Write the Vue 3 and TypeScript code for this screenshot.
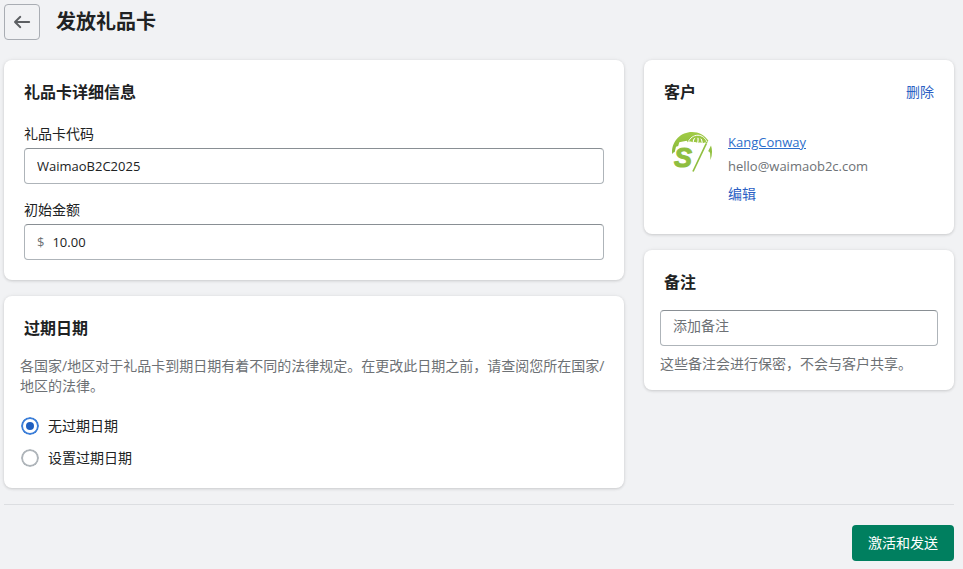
<script setup lang="ts">
import { ref } from 'vue'

type Expiry = 'none' | 'date'

const code = ref('WaimaoB2C2025')
const amount = ref('10.00')
const note = ref('')
const expiry = ref<Expiry>('none')

const expiryOptions: { value: Expiry; label: string }[] = [
  { value: 'none', label: '无过期日期' },
  { value: 'date', label: '设置过期日期' },
]
</script>

<template>
  <div class="page">
    <header class="header">
      <button class="back" type="button" aria-label="返回">
        <svg viewBox="0 0 20 20" width="20" height="20" aria-hidden="true">
          <path d="M17.2 10H3.2M8.3 4.8 3 10l5.3 5.2" fill="none" stroke="#5c5f62" stroke-width="1.9" stroke-linecap="round" stroke-linejoin="round" />
        </svg>
      </button>
      <h1>发放礼品卡</h1>
    </header>

    <form class="form" @submit.prevent>
      <div class="columns">
        <div class="column">
          <section class="card">
            <h2>礼品卡详细信息</h2>
            <div class="fields">
              <div class="field">
                <label for="code">礼品卡代码</label>
                <input id="code" v-model="code" class="control latin" type="text" />
              </div>
              <div class="field">
                <label for="amount">初始金额</label>
                <div class="control money latin">
                  <span class="prefix">$</span>
                  <input id="amount" v-model="amount" type="text" inputmode="decimal" />
                </div>
              </div>
            </div>
          </section>

          <section class="card compact">
            <h2>过期日期</h2>
            <p class="muted">各国家/地区对于礼品卡到期日期有着不同的法律规定。在更改此日期之前，请查阅您所在国家/地区的法律。</p>
            <div class="options">
              <label v-for="o in expiryOptions" :key="o.value" class="option">
                <input v-model="expiry" type="radio" name="expiry" :value="o.value" />
                <span>{{ o.label }}</span>
              </label>
            </div>
          </section>
        </div>

        <div class="column">
          <section class="card customer-card">
            <div class="card-head">
              <h2>客户</h2>
              <button class="plain" type="button">删除</button>
            </div>
            <div class="customer">
              <svg class="avatar" viewBox="0 0 40 40" width="40" height="40" aria-hidden="true">
                <defs>
                  <linearGradient id="leaf" x1="0" y1="0" x2="0" y2="1">
                    <stop offset="0" stop-color="#a1cb45" />
                    <stop offset="1" stop-color="#87b83c" />
                  </linearGradient>
                </defs>
                <path d="M.1 22C-.8 9.500 8.500 0 20 0c7 0 12.700 3.300 16.300 8.600l-1.500 3.300C32.500 7.500 27.500 5 23 6c-3.200.7-5.600 2.400-7.200 4.200L14.600 8.700 7.300 10.300 6.200 14 4 14.700 2.700 20 1.500 20.400Z" fill="url(#leaf)" />
                <path d="M16.200 9.600C18.300 6.100 21.400 3.300 26 3.200c4.200.2 7.300 3 9.200 7.100" fill="none" stroke="#fff" stroke-width="1" />
                <path d="M17 9.800C18.500 7 20.600 5.100 23.600 4.300 21.500 6.300 20.800 8 20.700 10.200 19.400 9.300 18.200 9.300 17 9.800ZM21.700 10.300C22 7.700 23 5.700 25 4.400c.7 2.100.7 4.200.1 6.400-1-.8-2.200-.9-3.400-.5ZM26.200 10.900c.6-2.300.6-4.500 0-6.600 2 1.300 3.200 3.400 3.500 6.800-1.200-.6-2.400-.6-3.500-.2ZM30.800 11.200c-.3-2.900-1.200-5-2.800-6.600 2.900.8 4.900 2.900 6.100 6.100-1.200-.3-2.300-.1-3.300.5Z" fill="#9bc742" />
                <path d="M34.300 11.500 21 39.500" stroke="#8fbe3f" stroke-width="1.700" />
                <path d="M36 19.500 39 13.500c1.500 4.500 1.300 9.700-.5 14.500l-.4-7-1.200-1.700Z" fill="#91c03f" />
                <text class="monogram" x="2" y="35">S</text>
              </svg>
              <div class="contact">
                <a class="latin" href="#customer">KangConway</a>
                <span class="muted latin">hello@waimaob2c.com</span>
                <button class="plain edit" type="button">编辑</button>
              </div>
            </div>
          </section>

          <section class="card compact">
            <h2><label for="note">备注</label></h2>
            <textarea id="note" v-model="note" class="control note" rows="1" placeholder="添加备注"></textarea>
            <p class="muted help">这些备注会进行保密，不会与客户共享。</p>
          </section>
        </div>
      </div>

      <footer class="footer">
        <button class="primary" type="submit">激活和发送</button>
      </footer>
    </form>
  </div>
</template>

<style>
body {
  background: #f1f2f4;
}
</style>

<style scoped>
.page {
  box-sizing: border-box;
  padding: 4px 9px 8px 4px;
  color: #202223;
  font: 14px/20px "Open Sans", "Noto Sans CJK SC", sans-serif;
}

.page *,
.page *::before {
  box-sizing: border-box;
}

button,
input,
textarea {
  font: inherit;
  color: inherit;
}

.latin {
  font-size: 13px;
}

button {
  cursor: pointer;
}

h1,
h2,
p {
  margin: 0;
}

h1 {
  font-size: 20px;
  line-height: 28px;
  font-weight: 700;
}

h2 {
  font-size: 16px;
  line-height: 24px;
  font-weight: 600;
}

.header {
  display: flex;
  align-items: center;
  gap: 16px;
  margin-bottom: 20px;
}

.back {
  display: grid;
  place-items: center;
  width: 36px;
  height: 36px;
  padding: 0;
  border: 1px solid #a9adb3;
  border-radius: 4px;
  background: transparent;
}

.columns {
  display: grid;
  grid-template-columns: 2fr 1fr;
  gap: 20px;
  align-items: start;
}

.column {
  display: grid;
  gap: 16px;
  min-width: 0;
}

.card {
  padding: 20px;
  border-radius: 8px;
  background: #fff;
  box-shadow: 0 0 5px rgba(23, 24, 24, 0.05), 0 1px 3px rgba(0, 0, 0, 0.14);
}

.compact {
  padding-inline: 16px;
}

.compact h2 {
  padding-left: 4px;
  margin-bottom: 16px;
}

.fields {
  display: grid;
  gap: 16px;
  margin-top: 20px;
}

.field {
  display: grid;
  gap: 4px;
}

.control {
  display: block;
  width: 100%;
  height: 36px;
  padding: 0 12px;
  border: 1px solid #aeb4b9;
  border-top-color: #898f94;
  border-radius: 4px;
  background: #fff;
}

.money {
  display: flex;
  align-items: center;
  gap: 8px;
}

.money input {
  flex: 1;
  min-width: 0;
  padding: 0;
  border: 0;
  outline: 0;
  background: none;
}

.prefix,
.muted {
  color: #6d7175;
}

.options {
  display: grid;
  gap: 12px;
  margin-top: 20px;
}

.option {
  display: flex;
  align-items: center;
  gap: 8px;
}

.option input {
  appearance: none;
  display: grid;
  place-items: center;
  width: 20px;
  height: 20px;
  margin: 0;
  border: 1px solid #fff;
  border-radius: 50%;
  background: #fff;
  box-shadow: inset 0 0 0 2px #aeb4b9;
}

.option input:checked {
  box-shadow: inset 0 0 0 2px #3b7ed8;
}

.option input:checked::before {
  content: "";
  width: 8px;
  height: 8px;
  border-radius: 50%;
  background: #1f5fc0;
}

.card-head {
  display: flex;
  align-items: center;
  justify-content: space-between;
}

.plain {
  padding: 0;
  border: 0;
  background: none;
  color: #2c5fc4;
}

.customer-card {
  padding-bottom: 30px;
}

.customer {
  display: flex;
  gap: 16px;
  margin-top: 28px;
  padding-left: 8px;
}

.avatar {
  flex: none;
}

.monogram {
  font: italic 700 27px "Liberation Sans", sans-serif;
  fill: #8fbe3f;
  stroke: #8fbe3f;
  stroke-width: 1px;
}

.contact {
  display: grid;
  gap: 4px;
  justify-items: start;
}

.contact a {
  color: #2c6ecb;
}

.edit {
  margin-top: 4px;
}

.note {
  padding-block: 5px;
  resize: none;
  overflow: hidden;
}

.note::placeholder {
  color: #6d7175;
  opacity: 1;
}

.help {
  margin-top: 8px;
}

.compact:has(.help) {
  padding-bottom: 16px;
}

.footer {
  display: flex;
  justify-content: flex-end;
  margin-top: 16px;
  padding-top: 20px;
  border-top: 1px solid #dcdee1;
}

.primary {
  height: 36px;
  padding: 0 16px;
  border: 0;
  border-radius: 4px;
  background: #007f5f;
  color: #fff;
}
</style>
